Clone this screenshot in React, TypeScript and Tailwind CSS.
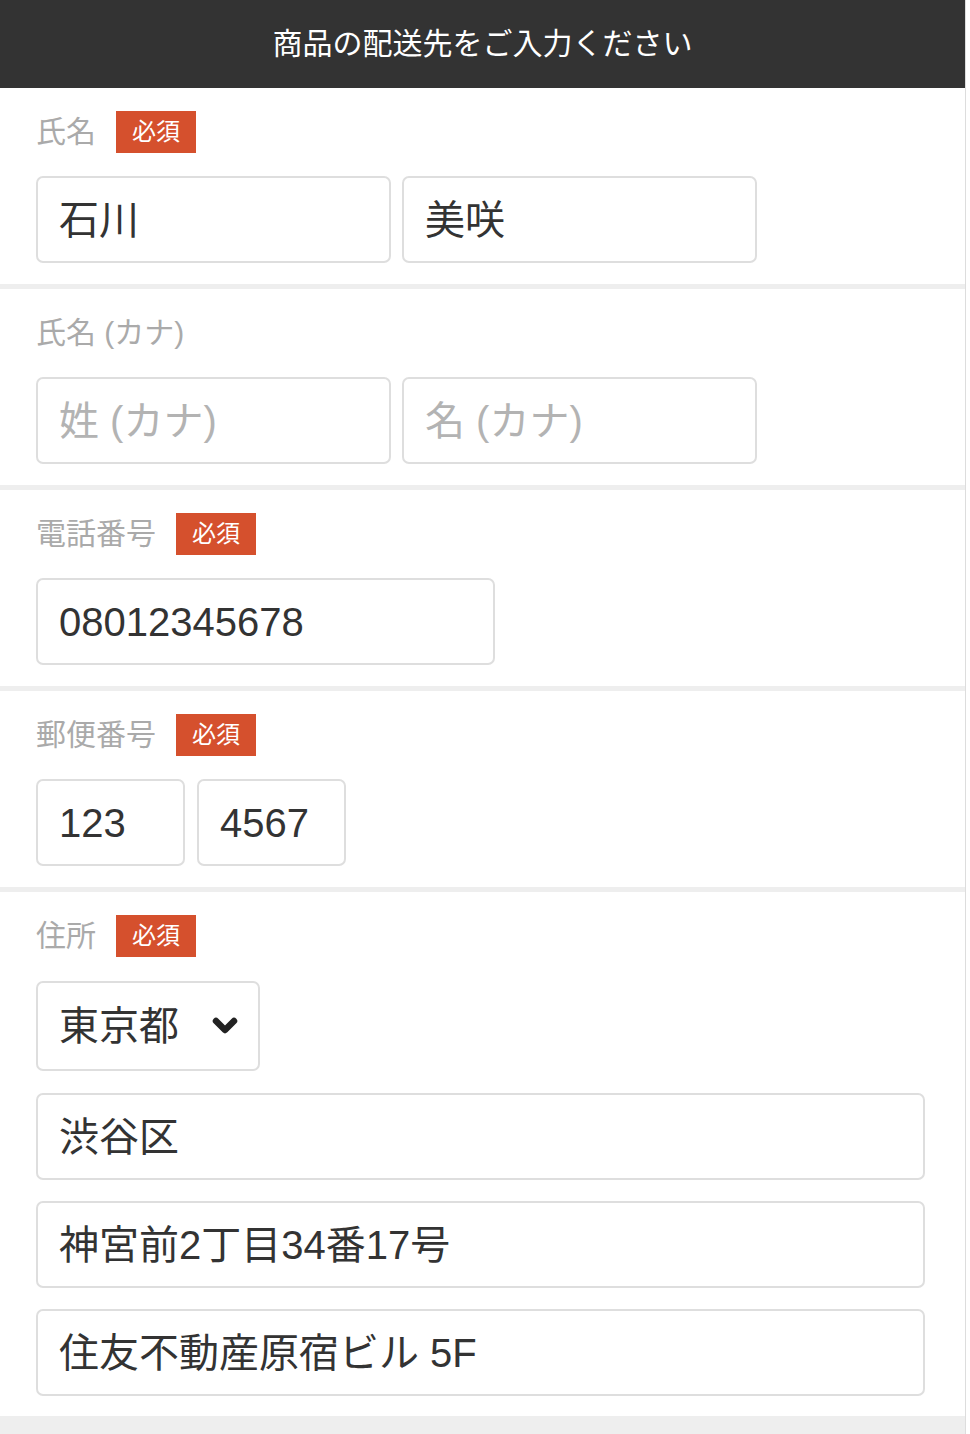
import React from "react";

const font = { fontFamily: '"Liberation Sans", "Noto Sans CJK JP", sans-serif' };

function Badge() {
  return (
    <span className="flex h-[42px] w-[80px] items-center justify-center bg-[#d5502d] text-[24px] leading-none text-white">
      必須
    </span>
  );
}

function Label({ text, required }: { text: string; required?: boolean }) {
  return (
    <div className="flex h-[42px] items-center gap-[20px]">
      <span className="text-[30px] leading-none text-[#aaaaaa]">{text}</span>
      {required && <Badge />}
    </div>
  );
}

function Field({ value, placeholder, w }: { value?: string; placeholder?: string; w: string }) {
  return (
    <div
      className={`flex h-[87px] items-center rounded-[7px] border-2 border-[#dedede] bg-white pl-[21px] text-[40px] leading-none ${w} ${
        value ? "text-[#333333]" : "text-[#b3b3b3]"
      }`}
    >
      {value ?? placeholder}
    </div>
  );
}

function Section({ children }: { children: React.ReactNode }) {
  return (
    <section className="flex flex-col gap-[23px] bg-white pb-[21px] pl-[36px] pt-[23px]">{children}</section>
  );
}

function Chevron() {
  return (
    <svg width="26" height="18" viewBox="0 0 26 18" className="shrink-0">
      <path
        d="M4 4 L13 13 L22 4"
        fill="none"
        stroke="#222222"
        strokeWidth="6.5"
        strokeLinecap="round"
        strokeLinejoin="round"
      />
    </svg>
  );
}

export default function App() {
  return (
    <div className="flex w-[970px] bg-white" style={font}>
      <div className="w-[966px] border-r border-[#dddddd] bg-[#eeeeee]">
        <header className="flex h-[88px] items-center justify-center bg-[#333333] text-[30px] leading-none text-white">
          商品の配送先をご入力ください
        </header>
        <div className="flex flex-col gap-[5px]">
          <Section>
            <Label text="氏名" required />
            <div className="flex gap-[11px]">
              <Field value="石川" w="w-[355px]" />
              <Field value="美咲" w="w-[355px]" />
            </div>
          </Section>
          <Section>
            <Label text="氏名 (カナ)" />
            <div className="flex gap-[11px]">
              <Field placeholder="姓 (カナ)" w="w-[355px]" />
              <Field placeholder="名 (カナ)" w="w-[355px]" />
            </div>
          </Section>
          <Section>
            <Label text="電話番号" required />
            <div className="flex">
              <Field value="08012345678" w="w-[459px]" />
            </div>
          </Section>
          <Section>
            <Label text="郵便番号" required />
            <div className="flex gap-[12px]">
              <Field value="123" w="w-[149px]" />
              <Field value="4567" w="w-[149px]" />
            </div>
          </Section>
          <section className="flex flex-col bg-white pb-[20px] pl-[36px] pr-[40px] pt-[23px]">
            <Label text="住所" required />
            <div className="mt-[24px] flex h-[90px] w-[224px] items-center justify-between rounded-[7px] border-2 border-[#dedede] bg-white pl-[21px] pr-[20px] text-[40px] leading-none text-[#333333]">
              <span>東京都</span>
              <Chevron />
            </div>
            <div className="mt-[22px] flex flex-col gap-[21px]">
              <Field value="渋谷区" w="w-full" />
              <Field value="神宮前2丁目34番17号" w="w-full" />
              <Field value="住友不動産原宿ビル 5F" w="w-full" />
            </div>
          </section>
          <div className="h-[13px]" />
        </div>
      </div>
    </div>
  );
}
